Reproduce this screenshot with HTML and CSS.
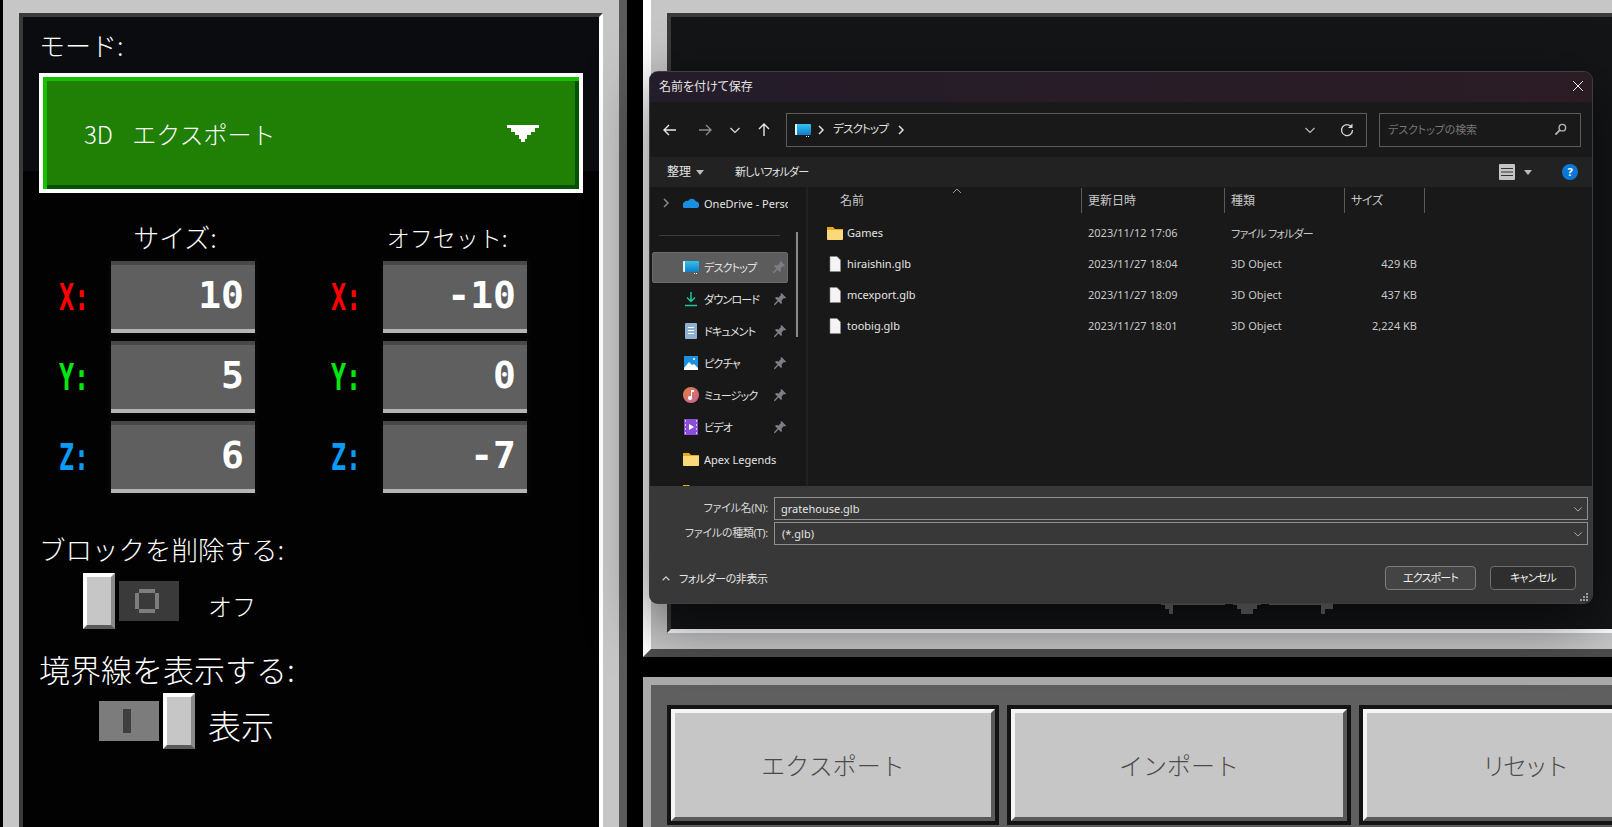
FILE: index.html
```html
<!DOCTYPE html>
<html lang="ja">
<head>
    <meta charset="UTF-8">
    <title>3D エクスポート</title>
    <link rel="stylesheet" href="styles.css">
</head>
<body>
    <svg class="icon-defs" aria-hidden="true">
        <defs>
            <linearGradient id="g-desktop" x1="0" y1="0" x2="0" y2="1"><stop offset="0" stop-color="#35c0ee"/><stop offset="1" stop-color="#0f7ec6"/></linearGradient>
            <linearGradient id="g-music" x1="0" y1="0" x2="1" y2="1"><stop offset="0" stop-color="#e8803c"/><stop offset="1" stop-color="#c8609a"/></linearGradient>
        </defs>
        <symbol id="i-desktop" viewBox="0 0 16 16"><rect y="2" width="16" height="11" rx="1" fill="url(#g-desktop)"/><path fill="#e4f8ff" d="M0 3a1 1 0 0 1 1-1h1v11H1a1 1 0 0 1-1-1z"/><path fill="#fff" d="M11 14h1v1h-1zM13 14h1v1h-1z"/></symbol>
        <symbol id="i-folder" viewBox="0 0 16 16"><path fill="#e8a917" d="M0 2h6l2 2h8v2H0z"/><path fill="#fcd978" d="M0 5h16v9a1 1 0 0 1-1 1H1a1 1 0 0 1-1-1z"/></symbol>
        <symbol id="i-file" viewBox="0 0 16 16"><path fill="#f4f4f4" stroke="#8c8c8c" stroke-width=".6" d="M3 .5h7l3.5 3.5v11.5H3z"/></symbol>
        <symbol id="i-pin" viewBox="0 0 12 12"><path fill="#7b7f85" d="M7.500 0 12 4.500 11 5.500 10 5 7.500 7.500 8 10 7 11 4.500 8.500 1 12H0V11L3.500 7.500 1 5 2 4 4.500 4.500 7 2 6.500 1z"/></symbol>
        <symbol id="i-chev" viewBox="0 0 12 12"><path fill="none" stroke="currentColor" stroke-width="1.2" d="M1.500 4 6 8.500 10.500 4"/></symbol>
        <symbol id="i-crumb" viewBox="0 0 8 12"><path fill="none" stroke="#ddd" stroke-width="1.500" d="M2 2l4 4-4 4"/></symbol>
    </svg>

    <div class="page">
        <aside class="side-frame">
            <div class="side-light">
                <div class="side-inner">
                    <div class="label label-26">モード:</div>
                    <div class="dropdown">
                        <span class="dropdown-text">3D エクスポート</span>
                        <svg class="dropdown-arrow" viewBox="0 0 32 17"><path fill="#fff" d="M0 0H32V3H28V7H24V10H20V14H18V17H14V14H12V10H8V7H4V3H0Z"/></svg>
                    </div>

                    <div class="coords">
                        <div class="coord-col">
                            <div class="coord-head">サイズ:</div>
                            <div class="coord-row"><span class="axis axis-x">X:</span><div class="num">10</div></div>
                            <div class="coord-row"><span class="axis axis-y">Y:</span><div class="num">5</div></div>
                            <div class="coord-row"><span class="axis axis-z">Z:</span><div class="num">6</div></div>
                        </div>
                        <div class="coord-col">
                            <div class="coord-head coord-head-narrow">オフセット:</div>
                            <div class="coord-row"><span class="axis axis-x">X:</span><div class="num">-10</div></div>
                            <div class="coord-row"><span class="axis axis-y">Y:</span><div class="num">0</div></div>
                            <div class="coord-row"><span class="axis axis-z">Z:</span><div class="num">-7</div></div>
                        </div>
                    </div>

                    <div class="label label-remove">ブロックを削除する:</div>
                    <div class="toggle toggle-off">
                        <div class="knob"></div>
                        <div class="track track-off">
                            <svg class="track-ring" viewBox="0 0 24 24"><path fill="#7d7d7d" fill-rule="evenodd" d="M4 0H20V4H24V20H20V24H4V20H0V4H4ZM4 4V20H20V4Z"/></svg>
                        </div>
                        <span class="toggle-text toggle-text-off">オフ</span>
                    </div>

                    <div class="label label-border">境界線を表示する:</div>
                    <div class="toggle toggle-on">
                        <div class="track track-on"><div class="track-bar"></div></div>
                        <div class="knob"></div>
                        <span class="toggle-text toggle-text-on">表示</span>
                    </div>
                </div>
            </div>
        </aside>

        <main class="main">
            <div class="view-frame">
                <div class="view-light">
                    <div class="view-inner"></div>
                </div>
            </div>
            <div class="actions">
                <div class="mc-btn"><div class="mc-face">エクスポート</div></div>
                <div class="mc-btn"><div class="mc-face">インポート</div></div>
                <div class="mc-btn"><div class="mc-face mc-face-tight">リセット</div></div>
            </div>
        </main>
    </div>

    <!-- save dialog -->
    <div class="dialog">
        <div class="titlebar">
            <span>名前を付けて保存</span>
            <svg class="close-icon" viewBox="0 0 12 12"><path fill="none" stroke="#eee" stroke-width="1" d="M1 1l10 10M11 1 1 11"/></svg>
        </div>

        <div class="navbar">
            <svg class="nav-icon" viewBox="0 0 16 16"><path fill="none" stroke="#e8e8e8" stroke-width="1.400" d="M14 8H2M7 3 2 8l5 5"/></svg>
            <svg class="nav-icon nav-forward" viewBox="0 0 16 16"><path fill="none" stroke="#8a8a8a" stroke-width="1.400" d="M2 8h12M9 3l5 5-5 5"/></svg>
            <svg class="nav-icon nav-down"><use href="#i-chev"/></svg>
            <svg class="nav-icon nav-up" viewBox="0 0 16 16"><path fill="none" stroke="#e8e8e8" stroke-width="1.400" d="M8 14V2M3 7l5-5 5 5"/></svg>
            <div class="address">
                <svg class="icon16"><use href="#i-desktop"/></svg>
                <svg class="crumb"><use href="#i-crumb"/></svg>
                <span class="crumb-text kana">デスクトップ</span>
                <svg class="crumb"><use href="#i-crumb"/></svg>
                <svg class="addr-chev"><use href="#i-chev"/></svg>
                <svg class="addr-refresh" viewBox="0 0 14 14"><path fill="none" stroke="#d8d8d8" stroke-width="1.300" d="M11.500 4A5.500 5.500 0 1 0 12.500 7"/><path fill="#d8d8d8" d="M12.500 .5v4.500H8z"/></svg>
            </div>
            <div class="search">
                <span class="search-text">デスクトップの検索</span>
                <svg class="search-icon" viewBox="0 0 14 14"><circle cx="9" cy="5" r="3.500" fill="none" stroke="#b5b5b5" stroke-width="1.500"/><path stroke="#b5b5b5" stroke-width="2" d="M6.500 7.500 1.500 12.500"/></svg>
            </div>
        </div>

        <div class="toolbar">
            <span class="tool-sort">整理</span>
            <span class="tool-caret"></span>
            <span class="tool-new kana">新しいフォルダー</span>
            <svg class="view-icon" viewBox="0 0 16 16"><rect width="16" height="16" rx="1" fill="#c4c4c4"/><path stroke="#333" d="M2 4.500h12M2 8h12M2 11.500h12"/></svg>
            <span class="tool-caret"></span>
            <span class="help">?</span>
        </div>

        <div class="browser">
            <nav class="sidebar">
                <div class="side-row side-row-cloud">
                    <svg class="side-arrow" viewBox="0 0 8 12"><path fill="none" stroke="#8a8a8a" stroke-width="1.500" d="M2 2l4 4-4 4"/></svg>
                    <svg class="icon16" viewBox="0 0 16 16"><path fill="#1a8fe0" d="M1 13a3 3 0 0 1 0-5.500A3.500 3.500 0 0 1 5 6a4.500 4.500 0 0 1 8 .5A3.300 3.300 0 0 1 16 10v1a2 2 0 0 1-2 2z"/></svg>
                    <span class="side-name">OneDrive - Personal</span>
                </div>
                <div class="side-divider"></div>
                <div class="side-row selected">
                    <svg class="icon16"><use href="#i-desktop"/></svg><span class="side-name kana">デスクトップ</span><svg class="pin"><use href="#i-pin"/></svg>
                </div>
                <div class="side-row">
                    <svg class="icon16" viewBox="0 0 16 16"><path fill="none" stroke="#22c29a" stroke-width="1.500" d="M8 1v9M4 6.500 8 10.500 12 6.500M2 14.500h12"/></svg><span class="side-name kana">ダウンロード</span><svg class="pin"><use href="#i-pin"/></svg>
                </div>
                <div class="side-row">
                    <svg class="icon16" viewBox="0 0 16 16"><rect x="2" y="0" width="12" height="16" rx="1" fill="#8fb0d0"/><path stroke="#fff" d="M5 4.500h6M5 7.500h6M5 10.500h6"/></svg><span class="side-name kana">ドキュメント</span><svg class="pin"><use href="#i-pin"/></svg>
                </div>
                <div class="side-row">
                    <svg class="icon16" viewBox="0 0 16 16"><rect x="1" y="1" width="14" height="14" fill="#1e90e0"/><path fill="#fff" d="M1 13 6 7l3 3 2-1 4 4v2H1z"/><circle cx="11" cy="4" r="1" fill="#fff"/></svg><span class="side-name kana">ピクチャ</span><svg class="pin"><use href="#i-pin"/></svg>
                </div>
                <div class="side-row">
                    <svg class="icon16" viewBox="0 0 16 16"><circle cx="8" cy="8" r="8" fill="url(#g-music)"/><path fill="#fff" d="M8 3h3v2H9v6a2 2 0 1 1-1-1.700z"/></svg><span class="side-name kana">ミュージック</span><svg class="pin"><use href="#i-pin"/></svg>
                </div>
                <div class="side-row">
                    <svg class="icon16" viewBox="0 0 16 16"><rect x="1" y="0" width="14" height="16" fill="#8a4fd8"/><path fill="#fff" d="M6 5l5 3-5 3z"/><path fill="#d9c4f5" d="M2 1h1v2H2zM2 5h1v2H2zM2 9h1v2H2zM2 13h1v2H2zM13 1h1v2h-1zM13 5h1v2h-1zM13 9h1v2h-1zM13 13h1v2h-1z"/></svg><span class="side-name kana">ビデオ</span><svg class="pin"><use href="#i-pin"/></svg>
                </div>
                <div class="side-row">
                    <svg class="icon16"><use href="#i-folder"/></svg><span class="side-name">Apex Legends</span>
                </div>
                <div class="side-row">
                    <svg class="icon16"><use href="#i-folder"/></svg><span class="side-name">Games</span>
                </div>
                <div class="side-scroll"></div>
            </nav>

            <section class="files">
                <div class="file-head">
                    <div class="head-name">名前<svg class="sort-caret" viewBox="0 0 10 6"><path fill="none" stroke="#9a9a9a" d="M1 5l4-4 4 4"/></svg></div>
                    <div>更新日時</div>
                    <div>種類</div>
                    <div class="head-size">サイズ</div>
                </div>
                <div class="file-row">
                    <div class="file-name"><svg class="icon16"><use href="#i-folder"/></svg>Games</div>
                    <div>2023/11/12 17:06</div><div class="kana">ファイル フォルダー</div><div class="file-size"></div>
                </div>
                <div class="file-row">
                    <div class="file-name"><svg class="icon16"><use href="#i-file"/></svg>hiraishin.glb</div>
                    <div>2023/11/27 18:04</div><div>3D Object</div><div class="file-size">429 KB</div>
                </div>
                <div class="file-row">
                    <div class="file-name"><svg class="icon16"><use href="#i-file"/></svg>mcexport.glb</div>
                    <div>2023/11/27 18:09</div><div>3D Object</div><div class="file-size">437 KB</div>
                </div>
                <div class="file-row">
                    <div class="file-name"><svg class="icon16"><use href="#i-file"/></svg>toobig.glb</div>
                    <div>2023/11/27 18:01</div><div>3D Object</div><div class="file-size">2,224 KB</div>
                </div>
            </section>
        </div>

        <div class="save-panel">
            <div class="save-fields">
                <label class="save-label">ファイル名(N):</label>
                <div class="combo"><span>gratehouse.glb</span><svg class="combo-chev"><use href="#i-chev"/></svg></div>
                <label class="save-label">ファイルの種類(T):</label>
                <div class="combo combo-type"><span>(*.glb)</span><svg class="combo-chev"><use href="#i-chev"/></svg></div>
            </div>
            <div class="save-footer">
                <svg class="hide-chev" viewBox="0 0 12 8"><path fill="none" stroke="#c8c8c8" stroke-width="1.600" d="M2 6l4-4 4 4"/></svg>
                <span class="hide-text">フォルダーの非表示</span>
                <button class="win-btn win-btn-primary kana">エクスポート</button>
                <button class="win-btn win-btn-cancel kana">キャンセル</button>
            </div>
            <svg class="grip" viewBox="0 0 8 8"><path fill="#9a9a9a" d="M6 0h2v2H6zM3 3h2v2H3zM6 3h2v2H6zM0 6h2v2H0zM3 6h2v2H3zM6 6h2v2H6z"/></svg>
        </div>
    </div>

    <svg class="gizmo" viewBox="0 0 172 10"><path fill="#444" d="M0 0H64V1H12V5H12V10H8V5H4V1H0ZM72 0H100V1H96V5H92V10H80V5H76V1H72ZM108 0H172V1H172V5H164V10H160V5H160V1H108Z"/></svg>
</body>
</html>
```

FILE: styles.css
```css
* {
    box-sizing: border-box;
}
html, body {
    margin: 0;
    height: 100%;
}
body {
    position: relative;
    overflow: hidden;
    background: #000;
    color: #fff;
    font-family: "Noto Sans CJK JP", "Liberation Sans", sans-serif;
}
.icon-defs {
    position: absolute;
    width: 0;
    height: 0;
}
.page {
    display: flex;
    height: 827px;
    padding-left: 3px;
}

/* left settings panel */
.side-frame {
    flex: none;
    width: 624px;
    border-right: 8px solid #5a5a5a;
}
.side-light {
    height: 100%;
    border: solid #c6c6c6;
    border-width: 13px 16px 0;
}
.side-inner {
    height: 100%;
    padding: 13px 0 0 16px;
    border-top: 4px solid #3a3a3a;
    border-left: 4px solid #3a3a3a;
    border-right: 4px solid #fff;
    background: linear-gradient(#0a0c10 154px, #020202 154px);
}
.label {
    font-weight: 300;
    white-space: nowrap;
}
.label-26 {
    font-size: 26px;
    line-height: 30px;
}
.dropdown {
    display: flex;
    align-items: center;
    justify-content: space-between;
    width: 544px;
    height: 120px;
    margin-top: 13px;
    padding: 0 40px 0 41px;
    background: #1f8005;
    box-shadow: inset 4px 4px 0 #14c000, inset -4px -4px 0 #045204;
    border: 4px solid #fff;
}
.dropdown-text {
    font-size: 24px;
    font-weight: 300;
    white-space: pre;
    word-spacing: 14px;
}
.dropdown-arrow {
    width: 32px;
    height: 17px;
}
.coords {
    display: flex;
    gap: 76px;
    margin: 29px 0 0 20px;
}
.coord-col {
    display: flex;
    flex-direction: column;
    gap: 8px;
    width: 196px;
}
.coord-head {
    width: 144px;
    height: 31px;
    margin: 0 0 0 44px;
    text-align: center;
    font-size: 26px;
    font-weight: 300;
    line-height: 30px;
    white-space: nowrap;
}
.coord-head-narrow {
    font-size: 23px;
}
.coord-row {
    display: flex;
    align-items: center;
    justify-content: space-between;
}
.axis {
    display: inline-block;
    width: 46px;
    font-family: "DejaVu Sans Mono", monospace;
    font-size: 38px;
    font-weight: bold;
    line-height: 44px;
    transform: scaleX(.66);
    transform-origin: left center;
}
.axis-x {
    color: #ff0000;
}
.axis-y {
    color: #00e810;
}
.axis-z {
    color: #0a9cf5;
}
.num {
    width: 144px;
    height: 72px;
    padding-right: 11px;
    background: #5f5f5f;
    border-top: 4px solid #4a474a;
    border-bottom: 4px solid #b5b5b5;
    outline: 3px solid #050505;
    text-align: right;
    font-family: "DejaVu Sans Mono", monospace;
    font-size: 38px;
    font-weight: bold;
    line-height: 60px;
}
.label-remove {
    margin-top: 40px;
    font-size: 26.5px;
    line-height: 32px;
}
.label-border {
    margin-top: 24px;
    font-size: 31px;
    line-height: 32px;
}
.toggle {
    display: flex;
    align-items: center;
    height: 56px;
    margin-top: 8px;
}
.toggle-off {
    padding-left: 44px;
    gap: 4px;
}
.toggle-on {
    padding-left: 60px;
    gap: 4px;
}
.knob {
    width: 32px;
    height: 56px;
    background: #c6c6c6;
    border: 4px solid;
    border-color: #fff #8a8a8a #5a5a5a #fff;
}
.track {
    display: flex;
    align-items: center;
    justify-content: center;
    width: 60px;
    height: 40px;
    padding-right: 4px;
}
.track-off {
    background: #3a3a3a;
}
.track-on {
    background: #7c7c7c;
}
.track-ring {
    width: 24px;
    height: 24px;
}
.track-bar {
    width: 8px;
    height: 24px;
    background: #3f3f3f;
}
.toggle-text {
    margin-top: 8px;
    font-weight: 300;
    white-space: nowrap;
}
.toggle-text-off {
    margin-left: 25px;
    font-size: 24px;
}
.toggle-text-on {
    margin-left: 9px;
    font-size: 33px;
}

/* right side */
.main {
    flex: none;
    display: flex;
    flex-direction: column;
    gap: 20px;
    margin-left: 16px;
}
.view-frame {
    width: 1100px;
    height: 657px;
    border-left: 8px solid #fff;
    border-bottom: 8px solid #4d4d4d;
}
.view-light {
    height: 100%;
    border: solid #c6c6c6;
    border-width: 13px 0 16px 16px;
}
.view-inner {
    height: 100%;
    background: #141517;
    border-top: 4px solid #3a3a3a;
    border-left: 4px solid #3a3a3a;
    border-bottom: 4px solid #fff;
}
.actions {
    display: grid;
    grid-template-columns: 332px 344px 330px;
    gap: 8px;
    width: 1100px;
    height: 150px;
    padding: 20px 0 0 16px;
    background: #5f5f5f;
    border-top: 8px solid #aaa;
    border-left: 8px solid #aaa;
}
.mc-btn {
    height: 120px;
    border: 4px solid #141414;
}
.mc-face {
    display: flex;
    align-items: center;
    justify-content: center;
    height: 100%;
    padding-bottom: 2px;
    background: #c6c6c6;
    border: 4px solid;
    border-color: #f5f5f5 #5a5a5a #5a5a5a #f5f5f5;
    color: #4a4a4a;
    font-size: 24px;
    font-weight: 300;
}
.mc-face-tight {
    letter-spacing: -3px;
}
.gizmo {
    position: absolute;
    left: 1161px;
    top: 604px;
    width: 172px;
    height: 10px;
}

/* windows save dialog */
.dialog {
    position: absolute;
    left: 650px;
    top: 72px;
    display: flex;
    flex-direction: column;
    width: 942px;
    height: 531px;
    overflow: hidden;
    border-radius: 8px;
    background: #191919;
    box-shadow: 0 0 0 1px #3e3e3e, 0 16px 60px rgba(0, 0, 0, .6);
    font-family: "Noto Sans", "Noto Sans CJK JP", sans-serif;
    font-size: 11px;
    font-feature-settings: "palt";
    color: #e4e4e4;
}
.kana {
    letter-spacing: -.8px;
}
.titlebar {
    flex: none;
    display: flex;
    align-items: center;
    justify-content: space-between;
    height: 30px;
    padding: 0 8px 2px 9px;
    background: linear-gradient(90deg, #241c2a, #2b1c24);
    font-size: 12px;
}
.close-icon {
    width: 12px;
    height: 12px;
}
.navbar {
    flex: none;
    display: flex;
    align-items: center;
    height: 55px;
    padding: 0 11px 0 12px;
    background: #191919;
}
.nav-icon {
    flex: none;
    width: 16px;
    height: 16px;
}
.nav-forward {
    margin-left: 19px;
}
.nav-down {
    width: 12px;
    height: 12px;
    margin-left: 16px;
    color: #ddd;
}
.nav-up {
    margin: 0 14px 0 15px;
}
.address, .search {
    display: flex;
    align-items: center;
    height: 34px;
    border: 1px solid #5c5c5c;
}
.address {
    flex: 1;
    padding: 0 12px 0 8px;
}
.icon16 {
    flex: none;
    width: 16px;
    height: 16px;
}
.crumb {
    flex: none;
    width: 8px;
    height: 12px;
    margin: 0 8px 0 6px;
}
.crumb-text {
    margin: 0 3px 3px 0;
    font-size: 11.500px;
}
.addr-chev {
    width: 12px;
    height: 12px;
    margin-left: auto;
    color: #bbb;
}
.addr-refresh {
    width: 14px;
    height: 14px;
    margin-left: 24px;
}
.search {
    flex: none;
    justify-content: space-between;
    width: 202px;
    margin-left: 12px;
    padding: 0 13px 0 8px;
    color: #777;
}
.search-text {
    margin-bottom: 2px;
    letter-spacing: -.1px;
}
.search-icon {
    width: 13px;
    height: 13px;
}
.toolbar {
    flex: none;
    display: flex;
    align-items: center;
    height: 30px;
    padding: 0 14px 0 17px;
    background: #222;
}
.tool-sort {
    margin-bottom: 2px;
    font-size: 12px;
}
.tool-caret {
    width: 0;
    height: 0;
    margin-left: 5px;
    border: 4px solid transparent;
    border-top: 5px solid #bbb;
    border-bottom: 0;
}
.tool-new {
    margin: 0 auto 2px 31px;
}
.view-icon {
    width: 16px;
    height: 16px;
    margin-right: 4px;
}
.help {
    width: 16px;
    height: 16px;
    margin-left: 30px;
    border-radius: 50%;
    background: #0a78d7;
    color: #fff;
    font-size: 11px;
    font-weight: bold;
    line-height: 16px;
    text-align: center;
}
.browser {
    flex: 1;
    display: flex;
    min-height: 0;
}
.sidebar {
    position: relative;
    flex: none;
    width: 158px;
    height: 299px;
    overflow: hidden;
    padding-top: 1px;
    border-right: 2px solid #222;
    background: #181818;
}
.side-row {
    position: relative;
    display: flex;
    align-items: center;
    gap: 5px;
    width: 136px;
    height: 32px;
    margin-left: 2px;
    padding: 0 0 2px 31px;
}
.side-row.selected {
    height: 31px;
    margin-bottom: 1px;
    padding-left: 30px;
    background: #5c5c5c;
    border: 1px solid #6a6a6a;
    border-radius: 2px;
}
.side-name {
    flex: 1;
    overflow: hidden;
    white-space: nowrap;
}
.side-arrow {
    position: absolute;
    left: 10px;
    top: 9px;
    width: 8px;
    height: 12px;
}
.pin {
    flex: none;
    width: 12px;
    height: 12px;
    margin-right: 2px;
}
.side-divider {
    width: 121px;
    height: 1px;
    margin: 15px 0 16px 9px;
    background: #3c3c3c;
}
.side-scroll {
    position: absolute;
    left: 146px;
    top: 45px;
    width: 2px;
    height: 105px;
    background: #8a8a8a;
}
.files {
    flex: 1;
}
.file-head, .file-row {
    display: grid;
    grid-template-columns: 274px 143px 120px 80px;
    align-items: center;
}
.file-head {
    height: 26px;
    margin-bottom: 5px;
    color: #c8c8c8;
    font-size: 12px;
}
.file-head > div {
    position: relative;
    height: 25px;
    line-height: 25px;
    padding-left: 6px;
    border-right: 1px solid #5a5a5a;
}
.file-head > .head-name {
    padding-left: 32px;
}
.file-head > .head-size {
    letter-spacing: -.3px;
}
.sort-caret {
    position: absolute;
    left: 144px;
    top: 0;
    width: 10px;
    height: 6px;
}
.file-row {
    height: 31px;
    padding-bottom: 2px;
    color: #c8c8c8;
}
.file-row > div {
    padding-left: 6px;
    white-space: nowrap;
}
.file-row > .file-name {
    display: flex;
    align-items: center;
    gap: 4px;
    padding-left: 19px;
    color: #e4e4e4;
}
.file-row > .file-size {
    padding-right: 8px;
    text-align: right;
}
.save-panel {
    position: relative;
    flex: none;
    height: 117px;
    padding: 11px 4px 0 0;
    background: #383838;
}
.save-fields {
    display: grid;
    grid-template-columns: 118px 1fr;
    column-gap: 6px;
    row-gap: 2px;
}
.save-label {
    line-height: 22px;
    text-align: right;
    color: #d8d8d8;
    letter-spacing: -.3px;
}
.combo {
    display: flex;
    align-items: center;
    justify-content: space-between;
    height: 23px;
    padding: 0 4px 0 6px;
    border: 1px solid #8e8e8e;
}
.combo-type {
    padding-left: 7px;
}
.combo-chev {
    width: 10px;
    height: 10px;
    color: #aaa;
}
.save-footer {
    display: flex;
    align-items: center;
    height: 24px;
    margin-top: 21px;
    padding: 0 12px 0 11px;
}
.hide-chev {
    width: 10px;
    height: 7px;
}
.hide-text {
    margin: 0 auto 0 8px;
    letter-spacing: -.45px;
}
.win-btn {
    height: 24px;
    padding: 0 0 2px;
    border-radius: 4px;
    font-family: inherit;
    font-size: 11px;
    color: #f0f0f0;
    font-feature-settings: "palt";
}
.win-btn-primary {
    width: 91px;
    background: #444;
    border: 1px solid #7c7c7c;
}
.win-btn-cancel {
    width: 86px;
    margin-left: 14px;
    background: #2e2e2e;
    border: 1px solid #707070;
}
.grip {
    position: absolute;
    right: 4px;
    bottom: 2px;
    width: 8px;
    height: 8px;
}
```
